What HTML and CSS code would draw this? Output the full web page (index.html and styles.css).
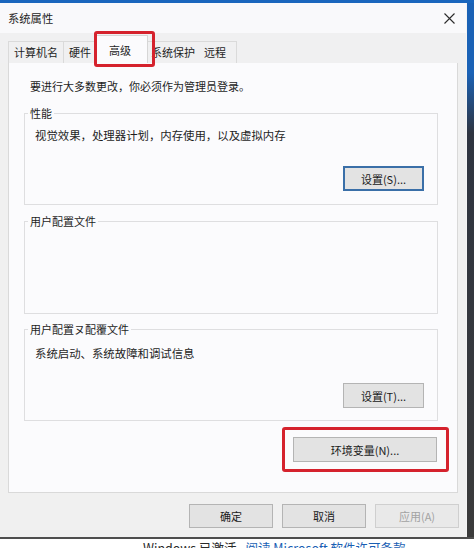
FILE: index.html
```html
<!DOCTYPE html>
<html lang="zh-CN">
<head>
    <meta charset="UTF-8">
    <meta name="viewport" content="width=device-width, initial-scale=1.0">
    <title>系统属性</title>
    <link rel="stylesheet" href="styles.css">
</head>
<body>
    <div class="screen">
        <div class="window">
            <div class="dialog">
                <div class="titlebar">
                    <span class="title">系统属性</span>
                    <svg class="close" width="11" height="11" viewBox="0 0 11 11">
                        <path d="M0.5 0.5 L10.5 10.5 M10.5 0.5 L0.5 10.5" stroke="#2b2b2b" stroke-width="1.1" fill="none"/>
                    </svg>
                </div>

                <!-- 탭 줄 -->
                <div class="tabs">
                    <div class="tab">计算机名</div>
                    <div class="tab">硬件</div>
                    <div class="tab active mark mark-tab">高级</div>
                    <div class="tab tab-protect">系统保护</div>
                    <div class="tab tab-last">远程</div>
                </div>

                <div class="panel">
                    <p class="intro">要进行大多数更改，你必须作为管理员登录。</p>

                    <div class="group group-perf">
                        <span class="group-title">性能</span>
                        <p class="group-text">视觉效果，处理器计划，内存使用，以及虚拟内存</p>
                        <button class="btn btn-small btn-focus">设置(S)...</button>
                    </div>

                    <div class="group group-profile">
                        <span class="group-title">用户配置文件</span>
                    </div>

                    <div class="group group-startup">
                        <span class="group-title">用户配置ヌ配覆文件</span>
                        <p class="group-text group-text-startup">系统启动、系统故障和调试信息</p>
                        <button class="btn btn-small btn-startup">设置(T)...</button>
                    </div>

                    <div class="env-row">
                        <button class="btn btn-env mark mark-env">环境变量(N)...</button>
                    </div>
                </div>

                <div class="footer">
                    <button class="btn btn-footer">确定</button>
                    <button class="btn btn-footer">取消</button>
                    <button class="btn btn-footer btn-disabled">应用(A)</button>
                </div>
            </div>
            <div class="edge"></div>
        </div>

        <div class="strip">
            <span>Windows 已激活</span><a class="strip-link">阅读 Microsoft 软件许可条款</a>
        </div>
    </div>
</body>
</html>
```

FILE: styles.css
```css
* {
    box-sizing: border-box;
}

body {
    margin: 0;
    background: #ffffff;
    font-family: "Noto Sans CJK SC", "Noto Sans", sans-serif;
    font-size: 11px;
    color: #1e1e1e;
}

.screen {
    width: 474px;
    height: 548px;
    overflow: hidden;
    display: flex;
    flex-direction: column;
}

.window {
    display: flex;
    height: 537px;
    border-top: 3px solid #1a66bd;
    background: #f0f0f0;
}

.dialog {
    width: 466px;
    display: flex;
    flex-direction: column;
}

.edge {
    width: 8px;
    border-left: 1px solid #f4f4f4;
    background: linear-gradient(to bottom, #1b62b6 0, #1b62b6 70px, #2e3440 130px, #3b3b3b 100%);
}

/* 타이틀바 */
.titlebar {
    height: 30px;
    display: flex;
    align-items: center;
    justify-content: space-between;
    padding: 0 11px 0 8px;
    background: #f9f9fb;
}

.title {
    font-size: 11.3px;
    line-height: 16px;
}

/* 탭 */
.tabs {
    height: 30px;
    margin-bottom: -1px;
    padding-left: 8px;
    display: flex;
    align-items: flex-end;
    position: relative;
    z-index: 1;
    background: #f0f0f1;
}

.tab {
    height: 22px;
    padding: 0 5px;
    border: 1px solid #dadada;
    border-bottom: none;
    line-height: 20px;
    background: #f0f0f1;
    white-space: nowrap;
}

.tab + .tab {
    border-left: none;
}

.tab.active {
    height: 28px;
    margin: 0 -2px;
    padding: 0 16px 0 13px;
    line-height: 28px;
    border: 1px solid #d6d6d6;
    border-bottom: none;
    background: #fbfbfd;
    position: relative;
    z-index: 2;
}

.tab-protect {
    margin-right: -2px;
}

.tab-last {
    padding-right: 10px;
}

/* 빨간 표시 */
.mark {
    position: relative;
}

.mark::after {
    content: '';
    position: absolute;
    border: 3px solid #d5222d;
    border-radius: 3px;
    pointer-events: none;
}

.mark-tab::after {
    top: -5px;
    right: -8px;
    bottom: -4px;
    left: -2px;
}

.mark-env::after {
    top: -11px;
    right: -13px;
    bottom: -11px;
    left: -12px;
}

/* 본문 패널 */
.panel {
    height: 431px;
    margin: 0 8px;
    padding: 15px 19px 0 15px;
    border: 1px solid #d9d9d9;
    background: #fbfbfd;
    display: flex;
    flex-direction: column;
}

.intro {
    margin: 0 0 0 6px;
    line-height: 16px;
}

.group {
    border: 1px solid #dedee0;
    padding: 0 13px 12px 10px;
    display: flex;
    flex-direction: column;
}

.group-title {
    align-self: flex-start;
    margin: -9px 0 0 -7px;
    padding: 0 2px;
    line-height: 16px;
    background: #fbfbfd;
}

.group-text {
    margin: 6px 0 0;
    line-height: 16px;
    font-size: 11.4px;
}

.group-perf {
    margin-top: 19px;
    padding-bottom: 13px;
}

.group-profile {
    margin-top: 16px;
    height: 93px;
}

.group-startup {
    margin-top: 15px;
}

.group-text-startup {
    margin-top: 8px;
}

/* 버튼 */
.btn {
    height: 25px;
    border: 1px solid #b4b4b4;
    background: #e3e3e3;
    font-family: inherit;
    font-size: 11px;
    color: #1a1a1a;
    padding: 0;
}

.btn-small {
    width: 81px;
    align-self: flex-end;
}

.group-perf .btn-small {
    margin-top: 23px;
}

.btn-startup {
    margin-top: 22px;
}

.btn-focus {
    border: 2px solid #3a6fa8;
}

.env-row {
    margin-top: 16px;
    display: flex;
    justify-content: flex-end;
    padding-right: 1px;
}

.btn-env {
    width: 144px;
}

.footer {
    height: 44px;
    padding: 11px 7px 0 0;
    display: flex;
    justify-content: flex-end;
    gap: 9px;
}

.btn-footer {
    width: 84px;
    height: 24px;
}

.btn-disabled {
    background: #e9e9e9;
    border-color: #cfcfcf;
    color: #a2a2a2;
}

/* 아래 바탕화면 */
.strip {
    height: 11px;
    border-top: 2px solid #4e4e4e;
    padding: 1px 0 0 143px;
    font-size: 12.5px;
    line-height: 16px;
    white-space: nowrap;
    color: #2a2a2a;
    overflow: hidden;
}

.strip-link {
    margin-left: 9px;
    color: #1a5fb4;
}
```
